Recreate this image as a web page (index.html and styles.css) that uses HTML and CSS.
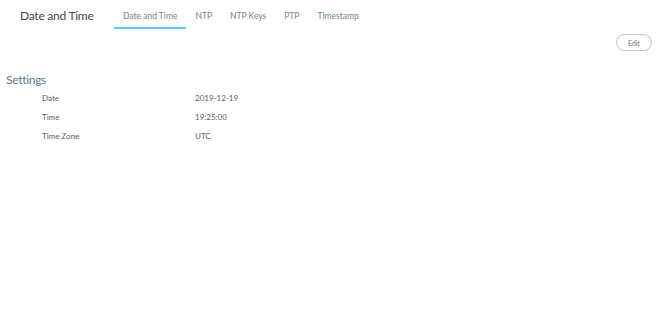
FILE: index.html
```html
<!DOCTYPE html>
<html lang="en">
<head>
    <meta charset="UTF-8">
    <title>Date and Time</title>
    <link rel="stylesheet" href="styles.css">
</head>
<body>
    <div class="top-bar">
        <h1 class="page-title">Date and Time</h1>
        <nav class="tabs">
            <a class="tab active">Date and Time</a>
            <a class="tab">NTP</a>
            <a class="tab">NTP Keys</a>
            <a class="tab">PTP</a>
            <a class="tab">Timestamp</a>
        </nav>
    </div>

    <div class="actions">
        <button class="edit-btn">Edit</button>
    </div>

    <section class="settings">
        <h2 class="section-title">Settings</h2>
        <div class="row">
            <span class="label">Date</span>
            <span class="value">2019-12-19</span>
        </div>
        <div class="row">
            <span class="label">Time</span>
            <span class="value">19:25:00</span>
        </div>
        <div class="row">
            <span class="label">Time Zone</span>
            <span class="value">UTC</span>
        </div>
    </section>
</body>
</html>
```

FILE: styles.css
```css
* {
    margin: 0;
    padding: 0;
    box-sizing: border-box;
}

body {
    font-family: 'Lato', 'Open Sans', sans-serif;
    background: #ffffff;
    color: #3d4a5c;
    width: 661px;
    height: 310px;
    overflow: hidden;
}

.top-bar {
    display: flex;
    align-items: flex-start;
    height: 30px;
    padding-left: 20px;
    white-space: nowrap;
}

.page-title {
    font-size: 12px;
    font-weight: 400;
    color: #3b4656;
    line-height: 18px;
    margin-top: 7px;
    width: 94px;
    letter-spacing: -0.25px;
}

.tabs {
    display: flex;
}

.tab {
    font-size: 8.5px;
    color: #77828f;
    line-height: 12px;
    padding: 10px 9px 5px;
    border-bottom: 2px solid transparent;
}

.tab.active {
    border-bottom-color: #5ac8f5;
}

.actions {
    display: flex;
    justify-content: flex-end;
    padding: 4px 9px 0 0;
}

.edit-btn {
    font-family: inherit;
    font-size: 7px;
    color: #6a7682;
    background: #ffffff;
    border: 1px solid #bfc5cc;
    border-radius: 9px;
    width: 36px;
    height: 17px;
}

.settings {
    padding-left: 6px;
    margin-top: 21px;
}

.section-title {
    font-size: 12px;
    font-weight: 400;
    color: #587b92;
    line-height: 16px;
    margin-bottom: 5px;
    letter-spacing: -0.3px;
}

.row {
    display: flex;
    font-size: 8px;
    line-height: 10px;
    padding-left: 36px;
    margin-bottom: 9px;
}

.label {
    width: 153px;
    color: #55616e;
}

.value {
    color: #55616e;
}
```
